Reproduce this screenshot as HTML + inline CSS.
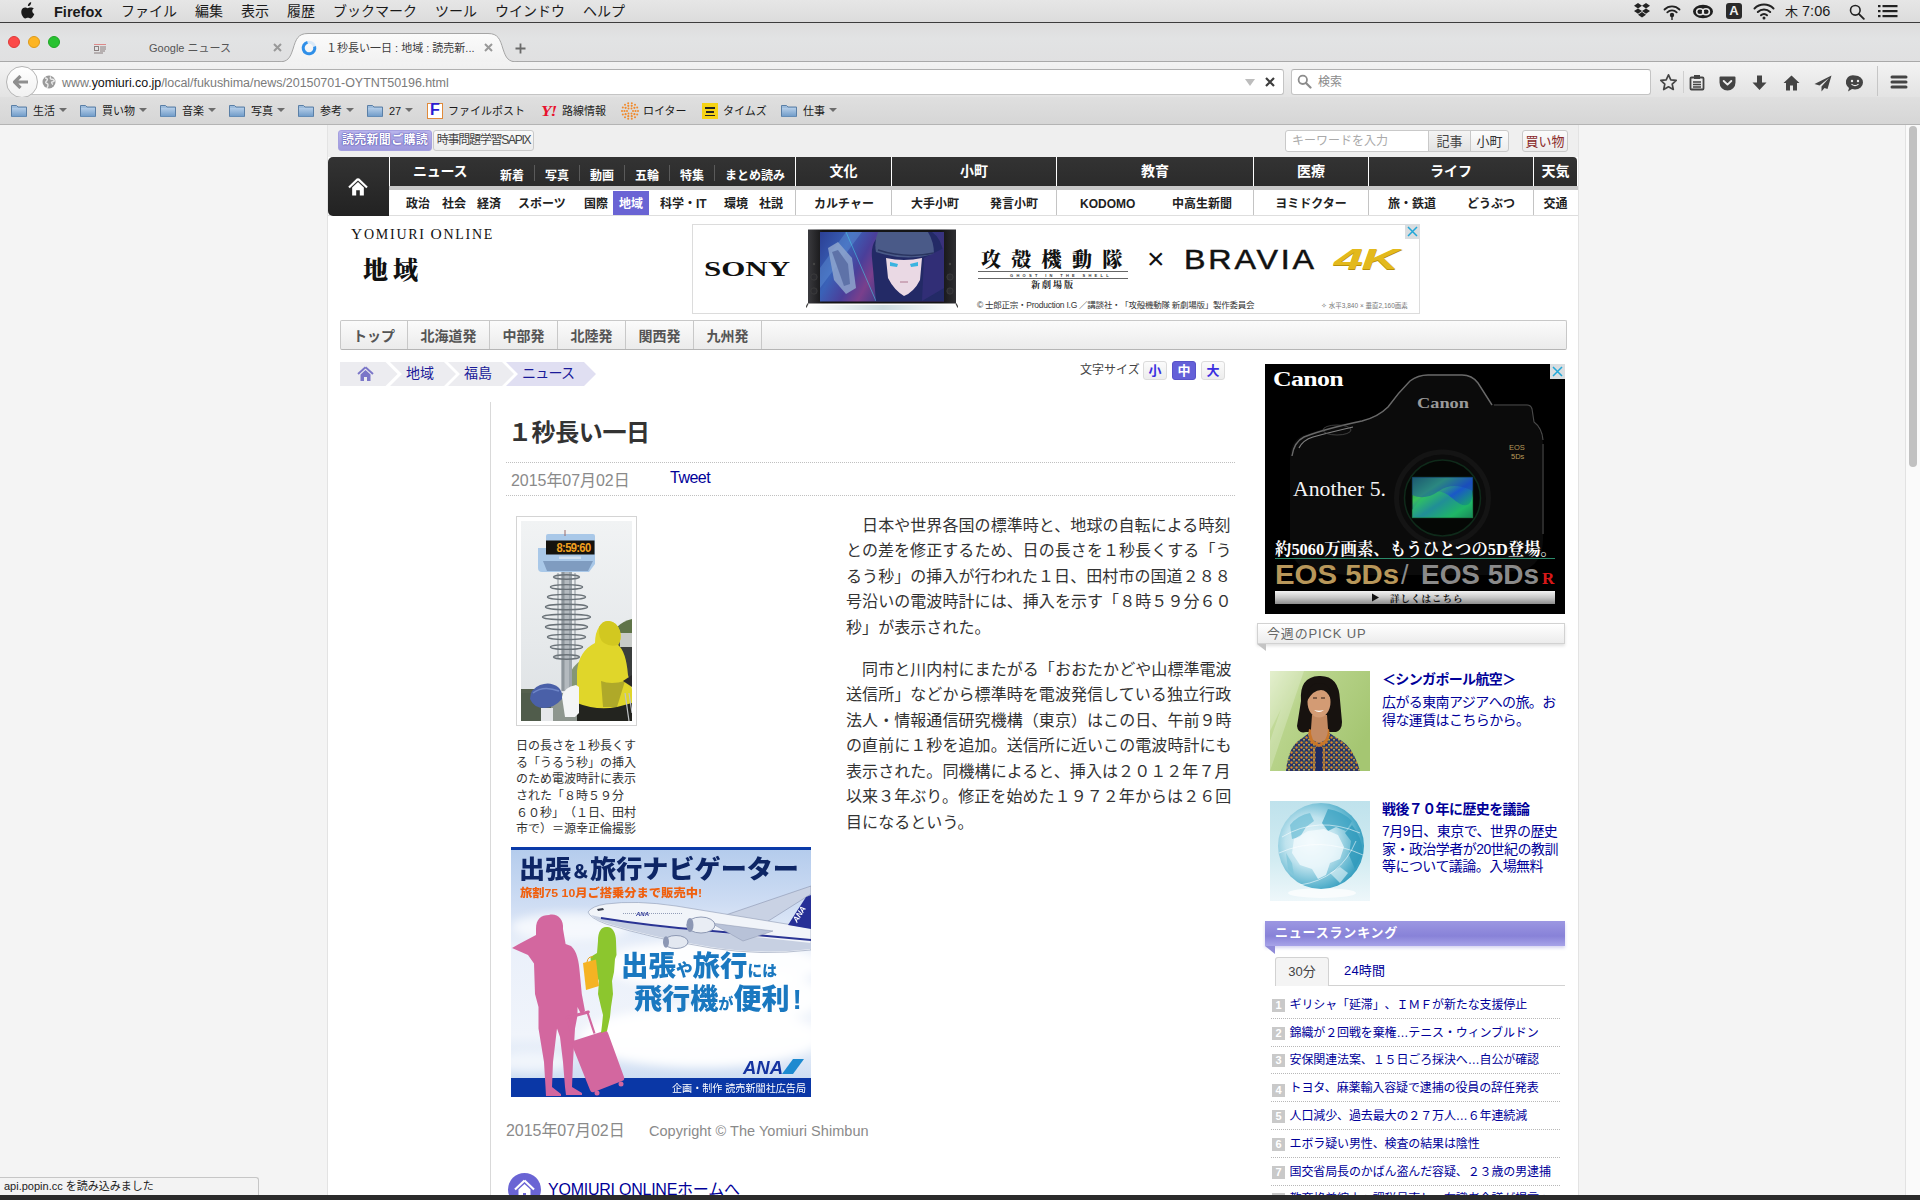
<!DOCTYPE html>
<html lang="ja">
<head>
<meta charset="utf-8">
<title>１秒長い一日 : 地域 : 読売新聞</title>
<style>
*{box-sizing:border-box;margin:0;padding:0}
html,body{width:1920px;height:1200px;overflow:hidden;background:#f4f4f4}
body{text-spacing-trim:space-all;font-family:"Liberation Sans","Noto Sans CJK JP",sans-serif;color:#333;position:relative}
.abs{position:absolute}
a{text-decoration:none;color:inherit}
/* ---------- mac menu bar ---------- */
#menubar{left:0;top:0;width:1920px;height:23px;background:linear-gradient(#e6e6e6,#dcdcdc);border-bottom:1px solid #3c3c3c}
#menubar span{position:absolute;top:0;line-height:22px;font-size:14px;color:#1a1a1a;white-space:nowrap}
/* ---------- tab strip ---------- */
#tabstrip{left:0;top:23px;width:1920px;height:39px;background:linear-gradient(#dddddd,#e2e3e4 40%,#e0e0e1)}
#tabline{left:0;top:61px;width:1920px;height:1px;background:#a9a9a9}
.tl{position:absolute;top:36px;width:12px;height:12px;border-radius:50%}
.tabtxt{position:absolute;font-size:11px;line-height:16px;white-space:nowrap}
/* ---------- nav bar ---------- */
#navbar{left:0;top:62px;width:1920px;height:35px;background:linear-gradient(#f3f3f3,#e3e3e3)}
#urlbar{left:28px;top:69px;width:1256px;height:26px;background:#fff;border:1px solid #c4c4c4;border-top-color:#b0b0b0;border-radius:3px}
#searchbar{left:1291px;top:69px;width:360px;height:26px;background:#fff;border:1px solid #c4c4c4;border-top-color:#b0b0b0;border-radius:3px}
#backbtn{left:6px;top:66px;width:32px;height:32px;border-radius:50%;background:linear-gradient(#fff,#f1f1f1);border:1px solid #b5b5b5}
/* ---------- bookmarks ---------- */
#bmbar{left:0;top:97px;width:1920px;height:28px;background:linear-gradient(#dfdfdf,#d6d6d6);border-bottom:1px solid #b4b4b4}
#bmbar span{position:absolute;top:6px;font-size:11px;line-height:16px;color:#1a1a1a;white-space:nowrap}
.fold{position:absolute;top:103px;width:16px;height:14px}
.dd{position:absolute;top:108px;width:0;height:0;border-left:4px solid transparent;border-right:4px solid transparent;border-top:4px solid #6d6d6d}
/* ---------- page ---------- */
#page{left:327px;top:125px;width:1252px;height:1075px;background:#fff;border-left:1px solid #e3e3e3;border-right:1px solid #e3e3e3}
#scroll{left:1905px;top:125px;width:15px;height:1075px;background:#fafafa;border-left:1px solid #e2e2e2}
#thumb{left:1909px;top:126px;width:8px;height:341px;border-radius:4px;background:#c1c1c1}
#bottom{left:0;top:1195px;width:1920px;height:5px;background:#2b2b2b}
#status{left:0;top:1177px;width:259px;height:18px;background:#f3f3f3;border:1px solid #c6c6c6;border-left:0;border-bottom:0;border-top-right-radius:3px;font-size:11px;line-height:17px;padding-left:4px;color:#222;white-space:nowrap}
</style>
</head>
<body>
<!-- PAGE -->
<div class="abs" id="page"></div>
<!--P1--><style>
.topbtn{position:absolute;top:130px;height:21px;border:1px solid #c9c9c9;border-radius:3px;font-size:12px;line-height:19px;text-align:center;white-space:nowrap;letter-spacing:-1px}
.gn-dark{position:absolute;top:157px;height:29px;background:linear-gradient(#333,#2b2b2b);color:#fff;font-weight:bold;font-size:14px;line-height:29px;text-align:center;white-space:nowrap}
.gn-sub{position:absolute;top:190px;height:25px;background:#fff;color:#222;font-weight:bold;font-size:12px;line-height:28px;white-space:nowrap}
.gn-sub span,.gn-dark span{position:absolute;top:0}
.gsep{position:absolute;top:190px;width:1px;height:25px;background:#c4c4c4}
.dsep{position:absolute;top:165px;width:1px;height:16px;background:#5a5a5a}
.ltab{position:absolute;top:321px;height:28px;border-right:1px solid #c8c8c8;font-size:14px;font-weight:bold;color:#555;line-height:30px;text-align:center}
.bc{position:absolute;top:365px;font-size:14px;line-height:16px;color:#1a1a99;white-space:nowrap}
.fs{position:absolute;top:361px;width:24px;height:19px;border:1px solid #dcdcdc;border-radius:3px;background:linear-gradient(#fbfbfb,#ededed);color:#3a2ee0;font-size:13px;font-weight:bold;line-height:18px;text-align:center}
</style>
<!-- top row -->
<div class="abs" style="left:328px;top:125px;width:1250px;height:32px;background:#efefef"></div>
<div class="topbtn" style="left:338px;width:94px;background:linear-gradient(#b9b5ec,#9c97dc);border-color:#a5a0e0;color:#fff;font-weight:bold;letter-spacing:0.300px;text-shadow:0 0 2px #4a44a8,0 0 1px #4a44a8">読売新聞ご購読</div>
<div class="topbtn" style="left:433px;width:101px;background:linear-gradient(#fafafa,#ececec);color:#444;letter-spacing:-1.250px">時事問題学習SAPIX</div>
<div class="topbtn" style="height:22px;line-height:21px;left:1285px;width:144px;background:#fff;border-radius:3px 0 0 3px;color:#aaa;text-align:left;padding-left:6px;letter-spacing:0;font-size:12px">キーワードを入力</div>
<div class="topbtn" style="height:22px;line-height:21px;left:1428px;width:43px;background:linear-gradient(#f4f4f4,#e2e2e2);border-radius:0;color:#444;font-size:13px;letter-spacing:0">記事</div>
<div class="topbtn" style="height:22px;line-height:21px;left:1470px;width:39px;background:linear-gradient(#fdfdfd,#ededed);border-radius:0 3px 3px 0;color:#333;font-size:13px;letter-spacing:0">小町</div>
<div class="topbtn" style="height:22px;line-height:21px;left:1522px;width:46px;background:linear-gradient(#fbfbfb,#ececec);color:#8a2a2a;font-size:13px;letter-spacing:0">買い物</div>

<!-- global nav -->
<div class="abs" style="left:328px;top:186px;width:1250px;height:4px;background:#c8c8c8"></div>
<div class="abs" style="left:328px;top:215px;width:1250px;height:1px;background:#dedede"></div>
<div class="abs" style="left:328px;top:157px;width:61px;height:59px;background:linear-gradient(#333,#222);border-radius:5px 0 0 5px"></div>
<svg class="abs" style="left:348px;top:178px" width="20" height="18" viewBox="0 0 22 20"><path d="M11 1L1 10.500" stroke="#fff" stroke-width="2.400" fill="none"/><path d="M11 1l10 9.500" stroke="#fff" stroke-width="2.400" fill="none"/><path d="M4.500 10.500L11 4.500l6.500 6v9h-4.500v-6h-4v6H4.500z" fill="#fff"/></svg>

<div class="gn-dark" style="left:390px;width:405px"><span style="left:23px;font-size:14px;letter-spacing:-0.300px">ニュース</span><span style="left:110px;font-size:12px;top:5px">新着</span><span style="left:155px;font-size:12px;top:5px">写真</span><span style="left:200px;font-size:12px;top:5px">動画</span><span style="left:245px;font-size:12px;top:5px">五輪</span><span style="left:290px;font-size:12px;top:5px">特集</span><span style="left:335px;font-size:12px;top:5px">まとめ読み</span></div>
<div class="dsep" style="left:534px"></div><div class="dsep" style="left:579px"></div><div class="dsep" style="left:624px"></div><div class="dsep" style="left:669px"></div><div class="dsep" style="left:714px"></div>
<div class="gn-dark" style="left:796px;width:95px">文化</div>
<div class="gn-dark" style="left:892px;width:164px">小町</div>
<div class="gn-dark" style="left:1057px;width:196px">教育</div>
<div class="gn-dark" style="left:1254px;width:114px">医療</div>
<div class="gn-dark" style="left:1369px;width:164px">ライフ</div>
<div class="gn-dark" style="left:1534px;width:43px;border-radius:0 4px 0 0">天気</div>

<div class="gn-sub" style="left:390px;width:406px"><span style="left:16px">政治</span><span style="left:52px">社会</span><span style="left:87px">経済</span><span style="left:128px">スポーツ</span><span style="left:194px">国際</span><span style="left:223px;top:1px;width:36px;height:24px;line-height:26px;background:#6a64d4;color:#fff;text-align:center">地域</span><span style="left:270px">科学・IT</span><span style="left:334px">環境</span><span style="left:369px">社説</span></div>
<div class="gsep" style="left:795px"></div><div class="gsep" style="left:891px"></div><div class="gsep" style="left:1056px"></div><div class="gsep" style="left:1253px"></div><div class="gsep" style="left:1368px"></div><div class="gsep" style="left:1533px"></div>
<div class="gn-sub" style="left:797px;width:94px;text-align:center">カルチャー</div>
<div class="gn-sub" style="left:892px;width:164px"><span style="left:19px">大手小町</span><span style="left:98px">発言小町</span></div>
<div class="gn-sub" style="left:1057px;width:196px"><span style="left:23px">KODOMO</span><span style="left:115px">中高生新聞</span></div>
<div class="gn-sub" style="left:1254px;width:114px;text-align:center">ヨミドクター</div>
<div class="gn-sub" style="left:1369px;width:164px"><span style="left:19px">旅・鉄道</span><span style="left:98px">どうぶつ</span></div>
<div class="gn-sub" style="left:1534px;width:43px;text-align:center">交通</div>

<!-- logo -->
<div class="abs" style="left:351px;top:224px;font-family:'Liberation Serif','Noto Serif CJK SC',serif;font-size:15.500px;line-height:20px;color:#111;letter-spacing:1.750px;white-space:nowrap;word-spacing:-1px">Y<span style="font-size:14px">OMIURI</span> O<span style="font-size:14px">NLINE</span></div>
<div class="abs" style="left:363px;top:253px;font-family:'Liberation Serif','Noto Serif CJK SC',serif;font-weight:900;font-size:25px;line-height:36px;color:#111;white-space:nowrap;letter-spacing:5px">地域</div>

<!-- sony ad -->
<div class="abs" style="left:692px;top:224px;width:728px;height:90px;background:#fff;border:1px solid #dcdcdc"></div>
<div class="abs" style="left:704px;top:258px;font-family:'Liberation Serif',serif;font-weight:bold;font-size:20px;line-height:22px;letter-spacing:0;color:#111;transform:scaleX(1.550);transform-origin:0 0">SONY</div>
<svg class="abs" style="left:806px;top:228px" width="152" height="84" viewBox="0 0 152 84">
<defs><linearGradient id="tvs" x1="0" y1="0" x2="1" y2="0.300"><stop offset="0" stop-color="#2b3f94"/><stop offset="0.250" stop-color="#3a62b8"/><stop offset="0.420" stop-color="#4a3f9a"/><stop offset="0.550" stop-color="#7a3f8c"/><stop offset="0.750" stop-color="#2d3a86"/><stop offset="1" stop-color="#3d2f7a"/></linearGradient>
<linearGradient id="tvf" x1="0" y1="0" x2="1" y2="0"><stop offset="0" stop-color="#3a3a3e"/><stop offset="0.100" stop-color="#151517"/><stop offset="0.900" stop-color="#151517"/><stop offset="1" stop-color="#2e2e32"/></linearGradient>
<linearGradient id="tvb" x1="0" y1="0" x2="1" y2="0"><stop offset="0" stop-color="#fff"/><stop offset="0.500" stop-color="#c8d8dc"/><stop offset="1" stop-color="#fff"/></linearGradient></defs>
<rect x="4" y="77" width="146" height="5" fill="url(#tvb)" opacity=".9"/>
<rect x="2" y="1.500" width="148" height="74" fill="url(#tvf)"/>
<path d="M2 75.500l-2 4M150 75.500l2 4" stroke="#444" stroke-width="1.300"/>
<rect x="14" y="4" width="124" height="69.500" fill="url(#tvs)"/>
<path d="M14 40L40 4h16L14 60z" fill="#6aa0e0" opacity=".35"/>
<path d="M22 20l10-6 14 16 4 30-10 6-12-14z" fill="#8ea4cc" opacity=".85"/>
<path d="M26 24l6-2 10 14 2 20-6 2z" fill="#5a6ea4" opacity=".9"/>
<path d="M40 4l30 69" stroke="#48d0e8" stroke-width=".8" opacity=".7"/>
<path d="M66 30q-2-20 14-26h46q12 8 12 30v39H70z" fill="#232a66"/>
<path d="M72 4h50q6 10 6 22-28 8-58-2-2-10 2-20z" fill="#4a5a88"/>
<path d="M72 22q28 9 56 3" stroke="#2a3560" stroke-width="1.500" fill="none"/>
<path d="M80 30q18 4 36 0l-2 22q-6 12-16 16-10-6-16-18z" fill="#ead9e4"/>
<path d="M84 34l8 2-1 3-7-1zM112 34l-8 2 1 3 7-1z" fill="#3ab4e0"/>
<path d="M94 54h8" stroke="#b07890" stroke-width="1"/>
<path d="M118 30l20-10v40l-22 13z" fill="#34307a" opacity=".8"/>
<circle cx="8" cy="36" r="1.200" fill="#444"/><circle cx="8" cy="49" r="3.200" fill="#2c2c30" stroke="#444" stroke-width=".6"/><circle cx="8" cy="63" r="3.200" fill="#2c2c30" stroke="#444" stroke-width=".6"/>
<circle cx="144" cy="36" r="1.200" fill="#444"/><circle cx="144" cy="49" r="3.200" fill="#2c2c30" stroke="#444" stroke-width=".6"/><circle cx="144" cy="63" r="3.200" fill="#2c2c30" stroke="#444" stroke-width=".6"/>
</svg>
<div class="abs" style="left:981px;top:246px;font-family:'Liberation Serif','Noto Serif CJK SC',serif;font-weight:900;font-size:20px;line-height:28px;letter-spacing:10.300px;color:#111;white-space:nowrap">攻殻機動隊</div>
<div class="abs" style="left:978px;top:271px;width:150px;height:1px;background:#666"></div>
<div class="abs" style="left:978px;top:278px;width:150px;height:1px;background:#666"></div>
<div class="abs" style="left:1010px;top:273px;font-size:4px;line-height:5px;letter-spacing:3.300px;color:#333;white-space:nowrap;font-weight:bold">GHOST IN THE SHELL</div>
<div class="abs" style="left:1031px;top:279px;font-family:'Liberation Serif','Noto Serif CJK SC',serif;font-weight:bold;font-size:9px;line-height:12px;letter-spacing:2px;color:#222;white-space:nowrap">新劇場版</div>
<div class="abs" style="left:1147px;top:244px;font-size:30px;line-height:30px;color:#111">×</div>
<div class="abs" style="left:1184px;top:243px;font-size:28px;line-height:34px;color:#111;letter-spacing:2.500px;-webkit-text-stroke:0.500px #111;transform:scaleX(1.150);transform-origin:0 0">BRAVIA</div>
<div class="abs" style="left:1334px;top:242px;font-size:30px;line-height:34px;font-weight:bold;font-style:italic;color:#e3b91c;letter-spacing:-1px;transform:scaleX(1.750);transform-origin:0 0;text-shadow:0 1px 0 #b8900a">4K</div>
<div class="abs" style="left:977px;top:300px;font-size:8.500px;line-height:10px;color:#333;white-space:nowrap;letter-spacing:-0.260px">© 士郎正宗・Production I.G ／講談社・「攻殻機動隊 新劇場版」製作委員会</div>
<div class="abs" style="left:1321px;top:301px;font-size:6.500px;line-height:9px;color:#777;white-space:nowrap">✧ 水平3,840 × 垂直2,160画素</div>
<div class="abs" style="left:1405px;top:224px;width:15px;height:15px;background:#d9dde0"></div>
<svg class="abs" style="left:1407px;top:226px" width="11" height="11" viewBox="0 0 11 11"><path d="M1 1l9 9M10 1l-9 9" stroke="#22a7d8" stroke-width="1.500"/></svg>

<!-- local nav -->
<div class="abs" style="left:340px;top:320px;width:1227px;height:30px;border:1px solid #c8c8c8;border-bottom-color:#b5b5b5;background:linear-gradient(#fbfbfb,#ebebeb);border-radius:2px"></div>
<div class="ltab" style="left:341px;width:67px">トップ</div>
<div class="ltab" style="left:408px;width:82px">北海道発</div>
<div class="ltab" style="left:490px;width:68px">中部発</div>
<div class="ltab" style="left:558px;width:68px">北陸発</div>
<div class="ltab" style="left:626px;width:68px">関西発</div>
<div class="ltab" style="left:694px;width:68px">九州発</div>

<!-- breadcrumb -->
<svg class="abs" style="left:340px;top:362px" width="258" height="24" viewBox="0 0 258 24"><path d="M0 0H45.500L57.500 12 45.500 24H0z" fill="#ececf0"/><path d="M50 0H104l12 12-12 12H50l12-12z" fill="#ececf0"/><path d="M108 0H162l12 12-12 12H108l12-12z" fill="#ececf0"/><path d="M166 0H244l12 12-12 12H166l12-12z" fill="#e0dff2"/></svg>
<svg class="abs" style="left:357px;top:366px" width="17" height="15" viewBox="0 0 17 15"><path d="M8.500 1.200L1 8" stroke="#7b76c8" stroke-width="1.900" fill="none"/><path d="M8.500 1.200L16 8" stroke="#7b76c8" stroke-width="1.900" fill="none"/><path d="M3.500 8.500l5-4.500 5 4.500V15H10v-4H7v4H3.500z" fill="#7b76c8"/></svg>
<span class="bc" style="left:406px">地域</span><span class="bc" style="left:464px">福島</span><span class="bc" style="left:522px;letter-spacing:-0.800px">ニュース</span>

<span class="abs" style="left:1080px;top:362px;font-size:12px;line-height:16px;color:#444;white-space:nowrap">文字サイズ</span>
<div class="fs" style="left:1143px">小</div>
<div class="fs" style="left:1172px;background:#6460d8;border-color:#5853c8;color:#fff">中</div>
<div class="fs" style="left:1201px">大</div>
<!--P1_END-->
<!--P2--><style>
.art{position:absolute;left:846px;width:392px;font-size:16px;line-height:25.600px;color:#333;white-space:nowrap;letter-spacing:0.070px}
.dot{position:absolute;left:506px;width:729px;height:0;border-top:1px dotted #c0c0c0}
.cap{position:absolute;left:516px;top:738px;font-size:12px;line-height:16.650px;color:#333;white-space:nowrap;letter-spacing:0}
</style>
<div class="abs" style="left:490px;top:402px;width:1px;height:800px;background:#d9d9d9"></div>
<div class="abs" style="left:508px;top:415px;font-size:24px;font-weight:bold;line-height:36px;color:#333;white-space:nowrap;letter-spacing:-0.400px">１秒長い一日</div>
<div class="dot" style="top:462px"></div>
<div class="abs" style="left:511px;top:470px;font-size:16px;line-height:22px;color:#8a8a8a;white-space:nowrap;letter-spacing:-0.050px">2015年07月02日</div>
<div class="abs" style="left:670px;top:467px;font-size:16px;line-height:22px;color:#000099;white-space:nowrap;letter-spacing:-0.500px">Tweet</div>
<div class="dot" style="top:495px"></div>

<!-- photo -->
<div class="abs" style="left:516px;top:516px;width:121px;height:210px;border:1px solid #d4d4d4;background:#fff"></div>
<svg class="abs" style="left:521px;top:521px" width="111" height="200" viewBox="0 0 111 200">
<defs><linearGradient id="sky" x1="0" y1="0" x2="0" y2="1"><stop offset="0" stop-color="#f1f3f4"/><stop offset="0.600" stop-color="#e6e9eb"/><stop offset="1" stop-color="#dde1e4"/></linearGradient></defs>
<rect width="111" height="200" fill="url(#sky)"/>
<path d="M96 106q6-6 15-8v40H92z" fill="#5f7448"/>
<path d="M50 150q6-10 14-12v30H50z" fill="#6d8258" opacity=".8"/>
<path d="M0 168h30v32H0z" fill="#55604e"/>
<path d="M0 172h111v28H0z" fill="#4d5a48" opacity=".55"/>
<rect x="40.500" y="42" width="10.500" height="128" fill="#b4babf"/>
<rect x="40.500" y="42" width="3" height="128" fill="#8e969c"/>
<rect x="48" y="42" width="3" height="128" fill="#9ca4aa"/>
<path d="M37 52v86M54 52v86" stroke="#8a9298" stroke-width="1"/>
<g fill="none" stroke="#6a7278" stroke-width="1.400"><ellipse cx="45.500" cy="56" rx="13" ry="2.2"/><ellipse cx="45.500" cy="66" rx="16" ry="2.4"/><ellipse cx="45.500" cy="76" rx="19" ry="2.6"/><ellipse cx="45.500" cy="86" rx="21" ry="2.7"/><ellipse cx="45.500" cy="96" rx="24" ry="2.8"/><ellipse cx="45.500" cy="106" rx="21" ry="2.7"/><ellipse cx="45.500" cy="116" rx="19" ry="2.6"/><ellipse cx="45.500" cy="126" rx="16" ry="2.4"/><ellipse cx="45.500" cy="136" rx="13" ry="2.2"/></g>
<path d="M17 27h8v-12q0-2 2-2h45q2 0 2 2v28l-6 8H21q-4 0-4-4z" fill="#a9c8e8"/>
<path d="M22 40h50l-5 10H26z" fill="#7f9cc0"/>
<rect x="25" y="19.500" width="48.500" height="14" fill="#15130e"/>
<text x="52.500" y="31" font-family="Liberation Sans,sans-serif" font-size="12" font-weight="bold" fill="#f0a020" text-anchor="middle" letter-spacing="-0.700" textLength="34" lengthAdjust="spacingAndGlyphs">8:59:60</text>
<rect x="38" y="35.500" width="22" height="2.500" fill="#dfe9f4" opacity=".8"/>
<path d="M44 9v6" stroke="#9a6a6a" stroke-width="1"/>
<path d="M97 112h14v44H100z" fill="#3a3d3c"/>
<path d="M98 112h13v14H99z" fill="#c8cbc8"/>
<path d="M56 200v-50q2-20 18-28 0-10 4-16 4-7 10-6 8 1 11 10 2 8-2 14 8 6 10 30l4 14v32z" fill="#e0d62a"/>
<path d="M78 106q4-7 10-6 8 1 11 10 2 8-2 14-8 2-14-2t-5-16z" fill="#d2c820"/>
<path d="M80 160q10 4 24 0l-8 26H82z" fill="#9a962a" opacity=".7"/>
<path d="M56 182q20 8 40 4l15-4v18H56z" fill="#23241f"/>
<path d="M102 160l9-6v12z" fill="#2a2a2a"/>
<path d="M9 178q0-10 10-14t18 2q5 4 4 12-8 9-18 9T9 178z" fill="#4a60a8"/>
<path d="M12 172q10-8 26-2" stroke="#6f86c8" stroke-width="1.500" fill="none"/>
<path d="M41 176q2-10 14-12l3 2v26l-4 4H44z" fill="#f4f5f6"/>
<path d="M20 187h12v13H20z" fill="#e6e8ea"/>
<path d="M104 172l4 28M108 172l3 20" stroke="#c0c4c6" stroke-width="1.200"/>
</svg>
<div class="cap">日の長さを１秒長くす<br>る「うるう秒」の挿入<br>のため電波時計に表示<br>された「８時５９分<br>６０秒」（１日、田村<br>市で）＝源幸正倫撮影</div>

<!-- article -->
<div class="art" style="top:512.500px">　日本や世界各国の標準時と、地球の自転による時刻<br>との差を修正するため、日の長さを１秒長くする「う<br>るう秒」の挿入が行われた１日、田村市の国道２８８<br>号沿いの電波時計には、挿入を示す「８時５９分６０<br>秒」が表示された。</div>
<div class="art" style="top:656.500px">　同市と川内村にまたがる「おおたかどや山標準電波<br>送信所」などから標準時を電波発信している独立行政<br>法人・情報通信研究機構（東京）はこの日、午前９時<br>の直前に１秒を追加。送信所に近いこの電波時計にも<br>表示された。同機構によると、挿入は２０１２年７月<br>以来３年ぶり。修正を始めた１９７２年からは２６回<br>目になるという。</div>

<!-- ANA ad -->
<svg class="abs" style="left:511px;top:847px" width="300" height="250" viewBox="0 0 300 250">
<defs><linearGradient id="asky" x1="0" y1="0" x2="0" y2="1"><stop offset="0" stop-color="#b3cbec"/><stop offset="0.220" stop-color="#cddcf3"/><stop offset="0.400" stop-color="#eaf0fa"/><stop offset="0.750" stop-color="#f0f4fb"/><stop offset="0.900" stop-color="#d3e1f4"/><stop offset="1" stop-color="#bcd2ee"/></linearGradient>
<filter id="bl" x="-20%" y="-50%" width="140%" height="200%"><feGaussianBlur stdDeviation="5"/></filter></defs>
<rect width="300" height="250" fill="url(#asky)"/>
<g filter="url(#bl)" fill="#fff"><ellipse cx="200" cy="118" rx="110" ry="24" opacity=".9"/><ellipse cx="190" cy="190" rx="120" ry="30" opacity=".95"/><ellipse cx="60" cy="80" rx="60" ry="14" opacity=".7"/><ellipse cx="250" cy="150" rx="60" ry="25" opacity=".9"/><ellipse cx="20" cy="215" rx="40" ry="10" opacity=".6"/></g>
<rect width="300" height="3" fill="#0a3aa8"/>
<text x="8" y="31" font-family="Liberation Sans,Noto Sans CJK JP,sans-serif" font-weight="900" font-size="25" fill="#0d2565" textLength="280" lengthAdjust="spacingAndGlyphs">出張<tspan font-size="18">＆</tspan>旅行ナビゲーター</text>
<text x="9" y="49.500" font-family="Liberation Sans,Noto Sans CJK JP,sans-serif" font-weight="900" font-size="11.500" fill="#f0600f" textLength="182" lengthAdjust="spacingAndGlyphs">旅割75  10月ご搭乗分まで販売中!</text>
<!-- plane -->
<path d="M203 72L300 39v8L232 90z" fill="#c9d2e4" stroke="#8a94ae" stroke-width=".6"/>
<path d="M77 65q4-6 18-8 30-4 70 2l135 22v22q-50 6-100-2-60-10-105-24-16-6-18-12z" fill="#f1f4f9" stroke="#8f9ab4" stroke-width=".6"/>
<path d="M80 68q40 10 110 16l110 12v6q-50 6-100-2-60-10-105-24-12-4-15-8z" fill="#c7d0e2"/>
<path d="M90 71q50 8 100 12l110 10" fill="none" stroke="#2a3494" stroke-width="1.800"/>
<path d="M277 78l18-28 5-2v34z" fill="#262f96"/>
<text x="0" y="0" font-family="Liberation Sans,sans-serif" font-style="italic" font-weight="bold" font-size="8" fill="#fff" transform="translate(286 76) rotate(-58)">ANA</text>
<text x="125" y="68.500" font-family="Liberation Sans,sans-serif" font-style="italic" font-weight="bold" font-size="6" fill="#262f96">ANA</text>
<path d="M112 66.500h60" stroke="#7b86a6" stroke-width=".8" stroke-dasharray="1 1"/>
<path d="M86 62l6-1 1 2-6 1z" fill="#3a4050"/>
<path d="M200 76l62 8-30 10z" fill="#b8c2d8" stroke="#8a94ae" stroke-width=".5"/>
<ellipse cx="190" cy="78" rx="14" ry="8" fill="#e9edf4" stroke="#7a86a4" stroke-width=".8"/>
<ellipse cx="179" cy="78" rx="3.500" ry="7" fill="#8c97b4"/>
<ellipse cx="165" cy="95" rx="12" ry="6.500" fill="#e3e8f1" stroke="#7a86a4" stroke-width=".8"/>
<ellipse cx="155" cy="95" rx="3" ry="5.800" fill="#8c97b4"/>
<rect y="231" width="300" height="19" fill="#0a37a6"/>
<!-- pink woman -->
<path d="M38 68C46 66 53 72 52 82L54.600 97 60 99C66 104 68 115 68.700 125L70.800 147 74 164 70 167 66.500 160 66.500 168.500 64 181.500 62 215 61 240 71 246V248H55L54 240 52 215 49 190 46 181.500 42 215 41 240 50 247V249H35L34.500 240 33 215 27.500 181.500V160L24 147 23 116.500 17 108 1 101 8 97 25 88V82C25 72 30 68 38 68Z" fill="#d3679f"/>
<path d="M62 194l31-10q3-1 4 2l16 44q1 3-2 4l-28 11q-3 1-4-2l-18-45q-1-3 1-4z" fill="#d3679f"/>
<path d="M55.700 170.700L77.300 165" stroke="#d3679f" stroke-width="3" stroke-linecap="round"/>
<path d="M56.500 171l6 24M76.500 165.500l7 21" stroke="#d3679f" stroke-width="2.200"/>
<circle cx="86" cy="246" r="2.500" fill="#d3679f"/><circle cx="110" cy="237" r="2.500" fill="#d3679f"/>
<!-- green woman -->
<path d="M95 80C101 79 105 85 105 94L105.500 108 104 112 103 125 101 134 102 147 100 160 99 170 96 184 90 186 91 178 92 168 90 160 87 147 88 134 84 125 80 118 79.500 110 86 106 87 94C87 85 90 80 95 80Z" fill="#8cc62e"/>
<path d="M72 116l13-3.500 3 26.500-13 4z" fill="#f5b323"/>
<path d="M76 115q1-6 6-5" stroke="#e8a21a" stroke-width="1" fill="none"/>
<text x="110" y="129" font-family="Liberation Sans,Noto Sans CJK JP,sans-serif" font-weight="900" font-size="28" fill="#1a78c0" textLength="156" lengthAdjust="spacingAndGlyphs">出張<tspan font-size="17">や</tspan>旅行<tspan font-size="15">には</tspan></text>
<text x="123" y="162" font-family="Liberation Sans,Noto Sans CJK JP,sans-serif" font-weight="900" font-size="28" fill="#1a78c0" textLength="168" lengthAdjust="spacingAndGlyphs">飛行機<tspan font-size="15">が</tspan>便利<tspan dx="3">!</tspan></text>
<text x="232" y="227" font-family="Liberation Sans,sans-serif" font-style="italic" font-weight="bold" font-size="18" fill="#1533a0" textLength="40" lengthAdjust="spacingAndGlyphs">ANA</text>
<path d="M271 227l11-15h11l-11 15z" fill="#1d8ad0"/>
<text x="295" y="244.500" text-anchor="end" font-family="Liberation Sans,Noto Sans CJK JP,sans-serif" font-size="10.500" fill="#fff" textLength="134" lengthAdjust="spacingAndGlyphs">企画・制作  読売新聞社広告局</text>
</svg>

<div class="abs" style="left:506px;top:1120px;font-size:16px;line-height:22px;color:#8a8a8a;white-space:nowrap;letter-spacing:-0.050px">2015年07月02日</div>
<div class="abs" style="left:649px;top:1120px;font-size:14.500px;line-height:22px;color:#8a8a8a;white-space:nowrap;letter-spacing:0.040px">Copyright © The Yomiuri Shimbun</div>

<div class="abs" style="left:508px;top:1173px;width:33px;height:33px;border-radius:50%;background:#6a64d4"></div>
<svg class="abs" style="left:514px;top:1179px" width="21" height="19" viewBox="0 0 21 19"><path d="M10.500 1.500L1 10.500M10.500 1.500L20 10.500" stroke="#fff" stroke-width="2.200" fill="none"/><path d="M4.500 10.500l6-5.500 6 5.500V19H4.500z" fill="#fff"/><rect x="9" y="14" width="3" height="5" fill="#6a64d4"/></svg>
<div class="abs" style="left:548px;top:1179px;font-size:16px;line-height:22px;color:#000099;white-space:nowrap;letter-spacing:-0.240px">YOMIURI ONLINEホームへ</div>
<!--P2_END-->
<!--P3--><style>
.pk{position:absolute;left:1382px;color:#000099;white-space:nowrap}
.rk{position:absolute;left:1289.500px;font-size:12px;line-height:16px;color:#000099;white-space:nowrap;letter-spacing:-0.120px}
.rn{position:absolute;left:1272px;width:13px;height:13px;background:#c9c9c9;color:#fff;font-size:11px;font-weight:bold;line-height:13px;text-align:center}
.rd{position:absolute;left:1271px;width:289px;height:0;border-top:1px dotted #b8b8b8}
</style>
<!-- Canon ad -->
<svg class="abs" style="left:1265px;top:364px" width="300" height="250" viewBox="0 0 300 250">
<defs>
<radialGradient id="cg" cx="0.500" cy="0.300" r="0.700"><stop offset="0" stop-color="#2a2a2a"/><stop offset="1" stop-color="#050505"/></radialGradient>
<linearGradient id="sens" x1="0" y1="0" x2="1" y2="1"><stop offset="0" stop-color="#1c6a3a"/><stop offset="0.300" stop-color="#39c25a"/><stop offset="0.550" stop-color="#1a58c8"/><stop offset="0.800" stop-color="#16a070"/><stop offset="1" stop-color="#0c4a5a"/></linearGradient>
<linearGradient id="btn" x1="0" y1="0" x2="0" y2="1"><stop offset="0" stop-color="#f4f4f4"/><stop offset="0.500" stop-color="#c8c8c8"/><stop offset="1" stop-color="#8e8e8e"/></linearGradient>
</defs>
<rect width="300" height="250" fill="#000"/>
<path d="M25 175V96q0-18 12-24 20-8 60-16 16-4 26-14 10-14 22-26 8-6 18-6h34q10 0 16 8l14 22h34q4 0 5 4l2 14q8 6 10 20v97q0 22-16 30l-40 6H80l-40-6q-15-8-15-30z" fill="#0b0b0b"/>
<path d="M27 92q2-14 12-19 20-8 58-16 16-4 26-14 10-14 22-26 8-6 18-6h34q10 0 16 8l14 22" fill="none" stroke="#8a8a8a" stroke-width="1.400" opacity=".75"/>
<path d="M34 84q4-8 14-11 14-4 40-10" fill="none" stroke="#d0d0d0" stroke-width="1.200" opacity=".6"/>
<path d="M229 41h33q4 0 5 4l2 13q8 6 9 18" fill="none" stroke="#5a5a5a" stroke-width="1.200" opacity=".8"/>
<ellipse cx="72" cy="66" rx="14" ry="5" fill="none" stroke="#555" stroke-width="1" opacity=".7"/>
<path d="M278 80v90" stroke="#2a2a2a" stroke-width="2"/>
<circle cx="177.500" cy="134" r="46" fill="none" stroke="#141414" stroke-width="5"/>
<circle cx="177.500" cy="134" r="38" fill="#050705" stroke="#0f2a1a" stroke-width="1.500"/>
<rect x="147" y="113" width="61" height="41" fill="url(#sens)" stroke="#0a2416" stroke-width="1"/>
<path d="M147 146q20-30 40-12t21-8v28h-61z" fill="#2ad05a" opacity=".45"/>
<path d="M147 113h61v14q-20-10-34 0t-27 4z" fill="#1a40b0" opacity=".45"/>
<text x="8" y="22" font-family="Liberation Serif,serif" font-weight="bold" font-size="20" fill="#fff" letter-spacing="-0.500" textLength="70" lengthAdjust="spacingAndGlyphs">Canon</text>
<text x="152" y="44" font-family="Liberation Serif,serif" font-weight="bold" font-size="14" fill="#9a9a9a" textLength="52" lengthAdjust="spacingAndGlyphs">Canon</text>
<text x="244" y="86" font-family="Liberation Sans,sans-serif" font-size="7.500" fill="#b89a5a">EOS</text>
<text x="246" y="95" font-family="Liberation Sans,sans-serif" font-size="7.500" fill="#b89a5a">5Ds</text>
<text x="28" y="132" font-family="Liberation Serif,serif" font-size="21" fill="#f4f4f4" textLength="93" lengthAdjust="spacingAndGlyphs">Another 5.</text>
<text x="10" y="191" font-family="Liberation Serif,Noto Serif CJK SC,serif" font-weight="bold" font-size="16.500" fill="#fff" textLength="282" lengthAdjust="spacingAndGlyphs">約5060万画素、もうひとつの5D登場。</text>
<rect x="10" y="194" width="280" height="1" fill="#2a8a6a"/>
<text x="10" y="220" font-family="Liberation Sans,sans-serif" font-weight="bold" font-size="27" fill="#b8975a" textLength="124" lengthAdjust="spacingAndGlyphs">EOS 5Ds</text>
<text x="136" y="220" font-family="Liberation Sans,sans-serif" font-size="27" fill="#8a8a8a">/</text>
<text x="156" y="220" font-family="Liberation Sans,sans-serif" font-weight="bold" font-size="27" fill="#8a8a8a" textLength="118" lengthAdjust="spacingAndGlyphs">EOS 5Ds</text>
<text x="277" y="220" font-family="Liberation Serif,serif" font-weight="bold" font-size="17" fill="#d81818">R</text>
<rect x="10" y="227" width="280" height="13" fill="url(#btn)"/>
<path d="M107 229.500l7 4-7 4z" fill="#111"/>
<text x="125" y="238" font-family="Liberation Serif,Noto Serif CJK SC,serif" font-weight="bold" font-size="9.500" fill="#111" letter-spacing="1">詳しくはこちら</text>
<rect x="285" y="0" width="15" height="15" fill="#d9dde0"/>
<path d="M288 3l9 9M297 3l-9 9" stroke="#22a7d8" stroke-width="1.500"/>
</svg>

<!-- pickup header -->
<div class="abs" style="left:1257px;top:623px;width:308px;height:21px;border:1px solid #d2d2d2;background:linear-gradient(#ffffff,#ececec);box-shadow:0 2px 3px rgba(0,0,0,.12)"></div>
<div class="abs" style="left:1257px;top:644px;width:0;height:0;border-top:7px solid #c4c4c4;border-left:9px solid transparent"></div>
<div class="abs" style="left:1267px;top:625px;font-size:13px;line-height:17px;color:#666;letter-spacing:0.850px;white-space:nowrap">今週のPICK UP</div>

<!-- pickup 1 -->
<svg class="abs" style="left:1270px;top:671px" width="100" height="100" viewBox="0 0 100 100">
<defs><linearGradient id="pg1" x1="0" y1="0" x2="1" y2="0.600"><stop offset="0" stop-color="#dcebc0"/><stop offset="0.350" stop-color="#b9d48c"/><stop offset="1" stop-color="#a5c672"/></linearGradient>
<pattern id="bt" width="5" height="5" patternUnits="userSpaceOnUse"><rect width="5" height="5" fill="#27316a"/><circle cx="1.500" cy="1.500" r="1.200" fill="#d98a2a"/><circle cx="4" cy="3.800" r="1" fill="#c8b040"/><circle cx="4" cy="1" r=".7" fill="#4a8a5a"/></pattern></defs>
<rect width="100" height="100" fill="url(#pg1)"/>
<path d="M0 0l30 0-30 60zM0 70l24-70h10L0 100z" fill="#fff" opacity=".22"/>
<path d="M31 30q-2-24 18-25 20-1 21 24l2 22q0 8-6 10H36q-8 2-9-6z" fill="#17120f"/>
<path d="M16 100q2-22 12-30l14-10h14l16 10q12 8 18 30z" fill="url(#bt)"/>
<path d="M39 58q-3 14 10 18 13-4 10-18l-3 1q1 12-7 14-8-2-7-14z" fill="#c9762a"/>
<path d="M46 76h6v24h-6z" fill="#1f2a60"/><path d="M44 76v24M54 76v24" stroke="#d98a2a" stroke-width="1.200"/>
<path d="M42 44h15l1 14q0 12-9 14-9-2-8-14z" fill="#c48a62"/>
<ellipse cx="49" cy="31" rx="11.500" ry="15.500" fill="#d39b74"/>
<path d="M37 30q0-18 12-18t12 16q-4-9-10-9-8 0-14 11z" fill="#17120f"/>
<path d="M44 39q5 4 10 0-5 1.500-10 0z" fill="#fff"/>
<path d="M43 27h4M51 27h4" stroke="#2a1a12" stroke-width="1.200"/>
</svg>
<div class="pk" style="top:670px;font-size:14px;font-weight:bold;line-height:18px;letter-spacing:-0.650px">＜シンガポール航空＞</div>
<div class="pk" style="top:693px;font-size:14px;line-height:18px;letter-spacing:-0.600px">広がる東南アジアへの旅。お<br>得な運賃はこちらから。</div>

<!-- pickup 2 -->
<svg class="abs" style="left:1270px;top:801px" width="100" height="100" viewBox="0 0 100 100">
<defs><radialGradient id="gl" cx="0.380" cy="0.450" r="0.650"><stop offset="0" stop-color="#eef8fb"/><stop offset="0.450" stop-color="#bfe3ee"/><stop offset="0.800" stop-color="#5fb5cf"/><stop offset="1" stop-color="#2c98bb"/></radialGradient>
<linearGradient id="pg2" x1="0" y1="0" x2="0" y2="1"><stop offset="0" stop-color="#bfe2ec"/><stop offset="0.600" stop-color="#d3ecf2"/><stop offset="1" stop-color="#eef7fa"/></linearGradient></defs>
<rect width="100" height="100" fill="url(#pg2)"/>
<ellipse cx="52" cy="92" rx="34" ry="5" fill="#fff" opacity=".7"/>
<circle cx="51" cy="45" r="43" fill="url(#gl)"/>
<path d="M58 8q14 2 24 12l-6 10-10-4-8 4-6-8z" fill="#3aa2c2" opacity=".75"/>
<path d="M82 24q10 12 11 28l-8 16-6-14 2-14-6-8z" fill="#2f9abb" opacity=".8"/>
<path d="M20 24q8-10 20-12l4 8-8 6-6 10-8 2z" fill="#6abcd4" opacity=".7"/>
<path d="M24 38l14-8 16-2 14 6 6 12-4 12-10 4-4 12-8 4-6-10-12-4-8-12z" fill="#f4fbfd" opacity=".75"/>
<path d="M16 52l6 10 2 12-6-6z" fill="#7cc4d8" opacity=".7"/>
<path d="M60 72l10-6 8 6-8 10z" fill="#e6f5f9" opacity=".6"/>
<path d="M12 36q36-22 78-4M9 52q40-18 84 2M30 84q40-6 56-44" stroke="#fff" stroke-width=".8" fill="none" opacity=".7"/>
</svg>
<div class="pk" style="top:800px;font-size:14px;font-weight:bold;line-height:18px;letter-spacing:-0.600px">戦後７０年に歴史を議論</div>
<div class="pk" style="top:823px;font-size:14px;line-height:17.600px;letter-spacing:-0.550px">7月9日、東京で、世界の歴史<br>家・政治学者が20世紀の教訓<br>等について議論。入場無料</div>

<!-- ranking header -->
<div class="abs" style="left:1265px;top:921px;width:300px;height:25px;background:linear-gradient(#9c97e2,#8882d8 60%,#a7a3e8);box-shadow:0 2px 3px rgba(90,84,200,.25)"></div>
<div class="abs" style="left:1265px;top:946px;width:0;height:0;border-top:8px solid #8f8ad8;border-left:10px solid transparent"></div>
<div class="abs" style="left:1275px;top:924px;font-size:13px;font-weight:bold;line-height:18px;color:#fff;letter-spacing:0.800px;white-space:nowrap">ニュースランキング</div>
<div class="abs" style="left:1275px;top:985px;width:290px;height:1px;background:#d2d2d2"></div>
<div class="abs" style="left:1275px;top:957px;width:54px;height:29px;border:1px solid #d2d2d2;border-bottom:0;border-radius:3px 3px 0 0;background:#f4f4f4;font-size:13px;line-height:28px;text-align:center;color:#444;letter-spacing:0">30分</div>
<div class="abs" style="left:1344px;top:957px;font-size:13px;line-height:28px;color:#000099;letter-spacing:0.200px;white-space:nowrap">24時間</div>
<div class="rn" style="top:999.0px">1</div><div class="rk" style="top:996.5px">ギリシャ「延滞」、ＩＭＦが新たな支援停止</div><div class="rd" style="top:1018.0px"></div>
<div class="rn" style="top:1027.0px">2</div><div class="rk" style="top:1024.5px">錦織が２回戦を棄権…テニス・ウィンブルドン</div><div class="rd" style="top:1046.0px"></div>
<div class="rn" style="top:1054.0px">3</div><div class="rk" style="top:1051.5px">安保関連法案、１５日ごろ採決へ…自公が確認</div><div class="rd" style="top:1073.0px"></div>
<div class="rn" style="top:1084.0px">4</div><div class="rk" style="top:1079.5px">トヨタ、麻薬輸入容疑で逮捕の役員の辞任発表</div><div class="rd" style="top:1101.0px"></div>
<div class="rn" style="top:1110.0px">5</div><div class="rk" style="top:1107.5px">人口減少、過去最大の２７万人…６年連続減</div><div class="rd" style="top:1129.0px"></div>
<div class="rn" style="top:1138.0px">6</div><div class="rk" style="top:1135.5px">エボラ疑い男性、検査の結果は陰性</div><div class="rd" style="top:1157.0px"></div>
<div class="rn" style="top:1166.0px">7</div><div class="rk" style="top:1163.5px">国交省局長のかばん盗んだ容疑、２３歳の男逮捕</div><div class="rd" style="top:1185.0px"></div>
<div class="rn" style="top:1193.0px">8</div><div class="rk" style="top:1190.5px">教育格差縮小へ課税見直し…有識者会議が提言へ</div>
<!--P3_END-->
<!--PAGECONTENT-->
<div class="abs" id="scroll"></div><div class="abs" id="thumb"></div>
<!-- CHROME -->
<svg width="0" height="0" style="position:absolute"><defs><linearGradient id="fg" x1="0" y1="0" x2="0" y2="1"><stop offset="0" stop-color="#b4cde8"/><stop offset="1" stop-color="#6f9bc8"/></linearGradient></defs></svg>
<div class="abs" id="menubar">
<svg class="abs" style="left:21px;top:2px" width="15" height="18" viewBox="0 0 15 18"><path fill="#1a1a1a" d="M10.2 0.3c.1 1-.3 1.9-.9 2.600-.6.700-1.500 1.200-2.400 1.100-.1-.9.300-1.900.9-2.500.6-.7 1.600-1.200 2.400-1.200zM12.900 6.300c-1 .6-1.600 1.500-1.600 2.700 0 1.400.8 2.500 2 3-.3.900-.7 1.700-1.300 2.500-.7 1-1.400 1.900-2.500 1.900s-1.400-.6-2.600-.6-1.600.6-2.600.6-1.800-1-2.500-2C.5 12.600-.3 9.800.8 7.600c.6-1.300 1.900-2.100 3.200-2.100 1.100 0 2 .7 2.700.7.600 0 1.800-.8 3.100-.7 1.100.05 2.300.6 3.100.8z"/></svg>
<span style="left:54px;top:1px;font-weight:bold;font-size:14.500px">Firefox</span>
<span style="left:121px">ファイル</span><span style="left:195px">編集</span><span style="left:241px">表示</span><span style="left:287px">履歴</span><span style="left:333px">ブックマーク</span><span style="left:435px">ツール</span><span style="left:495px">ウインドウ</span><span style="left:583px">ヘルプ</span>
<span style="left:1785px;font-size:14.500px"><i style="font-style:normal;font-size:13px">木</i> 7:06</span>
<!-- dropbox -->
<svg class="abs" style="left:1633px;top:3px" width="18" height="17" viewBox="0 0 18 17"><path fill="#222" d="M5 0l4 2.700-4 2.700-4-2.700zM13 0l4 2.700-4 2.700-4-2.700zM1 8.100l4-2.700 4 2.700-4 2.700zM13 5.400l4 2.700-4 2.700-4-2.700zM5 11.700l4-2.700 4 2.700-4 2.700z"/></svg>
<!-- wifi-dot -->
<svg class="abs" style="left:1663px;top:3px" width="18" height="17" viewBox="0 0 18 17"><g fill="none" stroke="#222" stroke-width="1.800" stroke-linecap="round"><path d="M1.500 6.500a10.500 10.500 0 0 1 15 0"/><path d="M4.300 9.300a6.600 6.600 0 0 1 9.400 0"/></g><circle cx="9" cy="12" r="2.200" fill="#222"/><rect x="8.300" y="13" width="1.400" height="4" fill="#222"/></svg>
<!-- CC -->
<svg class="abs" style="left:1692px;top:4px" width="22" height="15" viewBox="0 0 22 15"><ellipse cx="11" cy="7.500" rx="10" ry="6.800" fill="#1e1e1e"/><ellipse cx="8" cy="7.800" rx="3.400" ry="3" fill="none" stroke="#e4e4e4" stroke-width="1.600"/><ellipse cx="14" cy="7.800" rx="3.400" ry="3" fill="none" stroke="#e4e4e4" stroke-width="1.600"/></svg>
<!-- A box -->
<div class="abs" style="left:1726px;top:3px;width:16px;height:16px;border-radius:3px;background:#2a2a2a;color:#eee;font-size:13px;line-height:16px;text-align:center;font-weight:bold">A</div>
<!-- wifi -->
<svg class="abs" style="left:1753px;top:3px" width="22" height="17" viewBox="0 0 22 17"><g fill="none" stroke="#222" stroke-width="2" stroke-linecap="round"><path d="M1.500 5.500a13.500 13.500 0 0 1 19 0"/><path d="M4.800 9a8.800 8.800 0 0 1 12.400 0"/><path d="M8 12.300a4.300 4.300 0 0 1 6 0"/></g><circle cx="11" cy="15" r="1.500" fill="#222"/></svg>
<!-- search -->
<svg class="abs" style="left:1849px;top:4px" width="16" height="16" viewBox="0 0 16 16"><circle cx="6.300" cy="6.300" r="4.800" fill="none" stroke="#222" stroke-width="1.600"/><path d="M9.800 9.800l5 5" stroke="#222" stroke-width="1.900" stroke-linecap="round"/></svg>
<!-- list -->
<svg class="abs" style="left:1878px;top:5px" width="20" height="13" viewBox="0 0 20 13"><g fill="#222"><rect x="0" y="0" width="2.500" height="2.200"/><rect x="4.500" y="0" width="15" height="2.200"/><rect x="0" y="5" width="2.500" height="2.200"/><rect x="4.500" y="5" width="15" height="2.200"/><rect x="0" y="10" width="2.500" height="2.200"/><rect x="4.500" y="10" width="15" height="2.200"/></g></svg>
</div>

<div class="abs" id="tabstrip"></div>
<div class="abs" id="tabline"></div>
<div class="tl" style="left:8px;background:#fc4a49;border:1px solid #de3a38"></div>
<div class="tl" style="left:28px;background:#fdb524;border:1px solid #de9a1a"></div>
<div class="tl" style="left:48px;background:#28c231;border:1px solid #1ea625"></div>
<!-- inactive tab icon -->
<svg class="abs" style="left:93px;top:43px" width="14" height="12" viewBox="0 0 14 12"><g fill="none" stroke="#8a7f7f" stroke-width="1"><path d="M1 1.500h12" stroke="#d88"/><rect x="1.500" y="3.500" width="4" height="4"/><path d="M7 4h6M7 6h6M7 8h5M1 10h9"/></g></svg>
<span class="tabtxt" style="left:149px;top:40px;color:#555">Google ニュース</span>
<svg class="abs" style="left:273px;top:43px" width="9" height="9" viewBox="0 0 9 9"><path d="M1 1l7 7M8 1l-7 7" stroke="#999" stroke-width="2"/></svg>
<!-- active tab -->
<svg class="abs" style="left:278px;top:31px" width="240" height="32" viewBox="0 0 240 32"><defs><linearGradient id="tg" x1="0" y1="0" x2="0" y2="1"><stop offset="0" stop-color="#fbfbfb"/><stop offset="1" stop-color="#f1f1f1"/></linearGradient></defs><path d="M0 31 C10 31 12 27 15 18 C18 8 20 2.500 30 2.500 L210 2.500 C220 2.500 222 8 225 18 C228 27 230 31 240 31 L240 32 L0 32Z" fill="url(#tg)" stroke="#a5a5a5" stroke-width="1"/><rect x="0" y="31" width="240" height="1.500" fill="#f2f2f2"/></svg>
<svg class="abs" style="left:301px;top:40px" width="16" height="16" viewBox="0 0 16 16"><circle cx="8" cy="8" r="5.800" fill="none" stroke="#d9e9f8" stroke-width="3"/><path d="M8 2.200a5.800 5.800 0 1 0 5.800 5.800" fill="none" stroke="#2f8fe8" stroke-width="3" transform="rotate(-15 8 8)"/></svg>
<span class="tabtxt" style="left:326px;top:40px;color:#3c3c3c">１秒長い一日 : 地域 : 読売新...</span>
<svg class="abs" style="left:484px;top:43px" width="9" height="9" viewBox="0 0 9 9"><path d="M1 1l7 7M8 1l-7 7" stroke="#999" stroke-width="2"/></svg>
<svg class="abs" style="left:515px;top:43px" width="11" height="11" viewBox="0 0 11 11"><path d="M5.500 0.500v10M0.500 5.500h10" stroke="#6a6a6a" stroke-width="1.800"/></svg>

<div class="abs" id="navbar"></div>
<div class="abs" id="urlbar"></div>
<div class="abs" id="searchbar"></div>
<div class="abs" id="backbtn"></div>
<svg class="abs" style="left:13px;top:75px" width="16" height="14" viewBox="0 0 16 14"><path d="M7.500 1L1.500 7l6 6M2 7h13" fill="none" stroke="#8e8e8e" stroke-width="3.200" stroke-linejoin="miter"/></svg>
<!-- globe -->
<svg class="abs" style="left:42px;top:75px" width="14" height="14" viewBox="0 0 14 14"><circle cx="7" cy="7" r="6.500" fill="#9a9a9a"/><path d="M3 3c2 0 3 1 2 2.500S3 7 4 8s2 0 2 2-1 2.500-1 3M9 1.500c-1 1-1 2 0 2.500s2 0 3 1-1 2-2 2 0 2 1 2.500" stroke="#e8e8e8" stroke-width="1.400" fill="none"/></svg>
<span class="abs" style="left:62px;top:75px;font-size:12.500px;line-height:16px;color:#7b7b7b;white-space:nowrap;letter-spacing:-0.050px">www.<span style="color:#111">yomiuri.co.jp</span>/local/fukushima/news/20150701-OYTNT50196.html</span>
<div class="abs" style="left:1245px;top:79px;width:0;height:0;border-left:5px solid transparent;border-right:5px solid transparent;border-top:7px solid #bdbdbd"></div>
<svg class="abs" style="left:1265px;top:77px" width="10" height="10" viewBox="0 0 10 10"><path d="M1 1l8 8M9 1l-8 8" stroke="#3d3d3d" stroke-width="2.200"/></svg>
<svg class="abs" style="left:1297px;top:74px" width="15" height="15" viewBox="0 0 15 15"><circle cx="5.800" cy="5.800" r="4.200" fill="none" stroke="#8c8c8c" stroke-width="1.800"/><path d="M9 9l4.500 4.500" stroke="#8c8c8c" stroke-width="2.200" stroke-linecap="round"/></svg>
<span class="abs" style="left:1318px;top:74px;font-size:12px;line-height:16px;color:#8a8a8a">検索</span>
<!-- toolbar icons -->
<svg class="abs" style="left:1659px;top:73px" width="19" height="19" viewBox="0 0 19 19"><path d="M9.500 1.800l2.300 5 5.400.6-4 3.700 1.100 5.400-4.800-2.700-4.800 2.700 1.100-5.400-4-3.700 5.400-.6z" fill="none" stroke="#444" stroke-width="1.700" stroke-linejoin="round"/></svg>
<div class="abs" style="left:1683px;top:71px;width:1px;height:22px;background:#cfcfcf"></div>
<svg class="abs" style="left:1689px;top:74px" width="16" height="17" viewBox="0 0 16 17"><rect x="1.500" y="3.500" width="13" height="12" rx="1" fill="none" stroke="#444" stroke-width="1.800"/><rect x="5" y="1" width="6" height="4" fill="#444"/><path d="M4 8h8M4 10.500h8M4 13h8" stroke="#444" stroke-width="1.300"/></svg>
<svg class="abs" style="left:1719px;top:76px" width="17" height="15" viewBox="0 0 17 15"><path d="M1.500 0.500h14a1 1 0 0 1 1 1v5a8 8 0 0 1-16 0v-5a1 1 0 0 1 1-1z" fill="#444"/><path d="M4.700 5l3.800 3.600L12.300 5" fill="none" stroke="#eee" stroke-width="1.900" stroke-linecap="round" stroke-linejoin="round"/></svg>
<svg class="abs" style="left:1752px;top:75px" width="15" height="16" viewBox="0 0 15 16"><path d="M5 0.500h5v7h4.500L7.500 15 0.500 7.500H5z" fill="#444"/></svg>
<svg class="abs" style="left:1783px;top:75px" width="17" height="16" viewBox="0 0 17 16"><path d="M8.500 0.500L0.500 8h2.500v7.500h4v-5h3v5h4V8h2.500z" fill="#444"/></svg>
<svg class="abs" style="left:1814px;top:75px" width="18" height="17" viewBox="0 0 18 17"><path d="M17.500 0.500L0.500 9l5 1.500L15 3 7.500 11.500v5l3-3.500 3 1z" fill="#444"/></svg>
<svg class="abs" style="left:1846px;top:75px" width="18" height="17" viewBox="0 0 18 17"><path d="M9 0.500a8 7 0 0 1 0 14c-1 0-2-.2-3-.5L2 16.500l1-3.500A7 7 0 0 1 9 0.500z" fill="#444"/><circle cx="6" cy="6" r="1.200" fill="#eee"/><circle cx="12" cy="6" r="1.200" fill="#eee"/><path d="M5.500 9a4 3 0 0 0 7 0" stroke="#eee" stroke-width="1.200" fill="none"/></svg>
<div class="abs" style="left:1877px;top:66px;width:1px;height:30px;background:#c6c6c6"></div>
<svg class="abs" style="left:1890px;top:74px" width="18" height="16" viewBox="0 0 18 16"><path d="M2 3h14M2 8h14M2 13h14" stroke="#444" stroke-width="3" stroke-linecap="round"/></svg>

<div class="abs" id="bmbar">
<span style="left:33px">生活</span><span style="left:102px">買い物</span><span style="left:182px">音楽</span><span style="left:251px">写真</span><span style="left:320px">参考</span><span style="left:389px">27</span><span style="left:448px">ファイルポスト</span><span style="left:562px">路線情報</span><span style="left:643px">ロイター</span><span style="left:723px">タイムズ</span><span style="left:803px">仕事</span>
</div>
<svg class="fold" style="left:11px" viewBox="0 0 16 14"><path d="M0.500 2.500h5l1.500 1.500h8.500v9.500h-15z" fill="#9dbcdc" stroke="#5a7fa6" stroke-width="1"/><path d="M1 5h14v8.500H1z" fill="url(#fg)"/></svg>
<svg class="fold" style="left:80px" viewBox="0 0 16 14"><path d="M0.500 2.500h5l1.500 1.500h8.500v9.500h-15z" fill="#9dbcdc" stroke="#5a7fa6" stroke-width="1"/><path d="M1 5h14v8.500H1z" fill="url(#fg)"/></svg>
<svg class="fold" style="left:160px" viewBox="0 0 16 14"><path d="M0.500 2.500h5l1.500 1.500h8.500v9.500h-15z" fill="#9dbcdc" stroke="#5a7fa6" stroke-width="1"/><path d="M1 5h14v8.500H1z" fill="url(#fg)"/></svg>
<svg class="fold" style="left:229px" viewBox="0 0 16 14"><path d="M0.500 2.500h5l1.500 1.500h8.500v9.500h-15z" fill="#9dbcdc" stroke="#5a7fa6" stroke-width="1"/><path d="M1 5h14v8.500H1z" fill="url(#fg)"/></svg>
<svg class="fold" style="left:298px" viewBox="0 0 16 14"><path d="M0.500 2.500h5l1.500 1.500h8.500v9.500h-15z" fill="#9dbcdc" stroke="#5a7fa6" stroke-width="1"/><path d="M1 5h14v8.500H1z" fill="url(#fg)"/></svg>
<svg class="fold" style="left:367px" viewBox="0 0 16 14"><path d="M0.500 2.500h5l1.500 1.500h8.500v9.500h-15z" fill="#9dbcdc" stroke="#5a7fa6" stroke-width="1"/><path d="M1 5h14v8.500H1z" fill="url(#fg)"/></svg>
<svg class="fold" style="left:781px" viewBox="0 0 16 14"><path d="M0.500 2.500h5l1.500 1.500h8.500v9.500h-15z" fill="#9dbcdc" stroke="#5a7fa6" stroke-width="1"/><path d="M1 5h14v8.500H1z" fill="url(#fg)"/></svg>
<div class="dd" style="left:59px"></div>
<div class="dd" style="left:139px"></div>
<div class="dd" style="left:208px"></div>
<div class="dd" style="left:277px"></div>
<div class="dd" style="left:346px"></div>
<div class="dd" style="left:405px"></div>
<div class="dd" style="left:829px"></div>
<div class="abs" style="left:427px;top:103px;width:16px;height:16px;background:#fff;border:1px solid #e08a3a"><span style="position:absolute;left:2px;top:-2px;font-size:16px;line-height:16px;font-weight:bold;color:#2a1bd0">F</span></div>
<span class="abs" style="left:541px;top:102px;font-family:'Liberation Serif',serif;font-weight:bold;font-style:italic;font-size:14px;line-height:16px;color:#e8112d;letter-spacing:-1px;transform:scaleX(1.250);transform-origin:0 0;margin-top:2px">Y!</span>
<svg class="abs" style="left:621px;top:102px" width="18" height="18" viewBox="0 0 18 18"><g fill="#f08a2c"><circle cx="12.0" cy="9.0" r="1.0"/><circle cx="10.5" cy="11.6" r="1.0"/><circle cx="7.5" cy="11.6" r="1.0"/><circle cx="6.0" cy="9.0" r="1.0"/><circle cx="7.5" cy="6.4" r="1.0"/><circle cx="10.5" cy="6.4" r="1.0"/><circle cx="14.5" cy="9.0" r="1.1"/><circle cx="13.4" cy="12.2" r="1.1"/><circle cx="10.7" cy="14.2" r="1.1"/><circle cx="7.3" cy="14.2" r="1.1"/><circle cx="4.6" cy="12.2" r="1.1"/><circle cx="3.5" cy="9.0" r="1.1"/><circle cx="4.6" cy="5.8" r="1.1"/><circle cx="7.3" cy="3.8" r="1.1"/><circle cx="10.7" cy="3.8" r="1.1"/><circle cx="13.4" cy="5.8" r="1.1"/><circle cx="17.0" cy="9.0" r="1.0"/><circle cx="16.2" cy="12.5" r="1.0"/><circle cx="14.0" cy="15.3" r="1.0"/><circle cx="10.8" cy="16.8" r="1.0"/><circle cx="7.2" cy="16.8" r="1.0"/><circle cx="4.0" cy="15.3" r="1.0"/><circle cx="1.8" cy="12.5" r="1.0"/><circle cx="1.0" cy="9.0" r="1.0"/><circle cx="1.8" cy="5.5" r="1.0"/><circle cx="4.0" cy="2.7" r="1.0"/><circle cx="7.2" cy="1.2" r="1.0"/><circle cx="10.8" cy="1.2" r="1.0"/><circle cx="14.0" cy="2.7" r="1.0"/><circle cx="16.2" cy="5.5" r="1.0"/></g></svg>
<div class="abs" style="left:702px;top:103px;width:16px;height:16px;background:#f5d315"></div><div class="abs" style="left:705px;top:107px;width:10px;height:2px;background:#222"></div><div class="abs" style="left:706px;top:111px;width:8px;height:2px;background:#222"></div><div class="abs" style="left:705px;top:115px;width:10px;height:1px;background:#222"></div>
<!--CHROME_END-->
<div class="abs" id="status">api.popin.cc を読み込みました</div>
<div class="abs" id="bottom"></div>
</body>
</html>
